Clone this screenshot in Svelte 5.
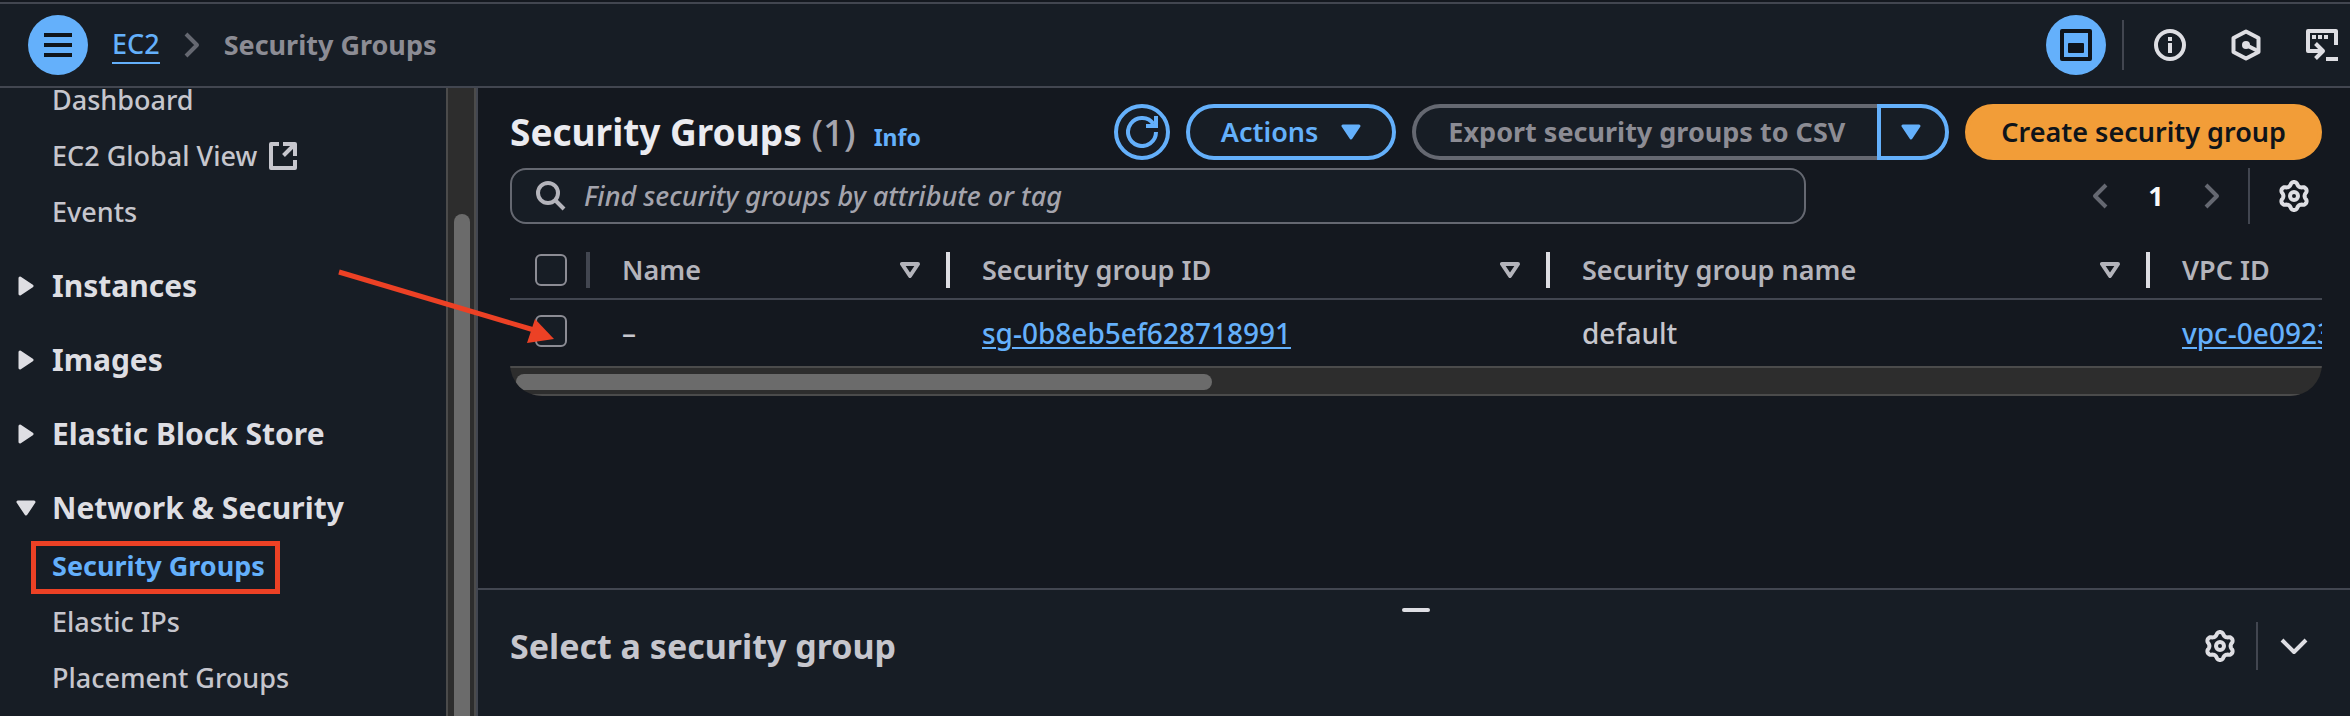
<script>
  const topLinks = [
    { label: 'Dashboard' },
    { label: 'EC2 Global View', external: true },
    { label: 'Events' }
  ];
  const sections = ['Instances', 'Images', 'Elastic Block Store'];
  const networkLinks = [
    { label: 'Security Groups', current: true },
    { label: 'Elastic IPs' },
    { label: 'Placement Groups' }
  ];
  const columns = ['Name', 'Security group ID', 'Security group name'];

  // Six-lobed gear outline in a 32 unit box.
  const gear =
    Array.from({ length: 120 }, (_, i) => {
      const a = (i * Math.PI) / 60;
      const c = -Math.cos(6 * a);
      const r = 12.3 + 1.7 * Math.sign(c) * Math.pow(Math.abs(c), 0.7);
      return `${i ? 'L' : 'M'}${(16 + r * Math.cos(a)).toFixed(2)} ${(16 + r * Math.sin(a)).toFixed(2)}`;
    }).join('') + 'Z';
</script>

{#snippet gearIcon()}
  <svg width="32" height="32" viewBox="0 0 32 32" fill="none" stroke="currentColor" stroke-linejoin="round" aria-hidden="true">
    <path d={gear} stroke-width="4" />
    <circle cx="16" cy="16" r="4" stroke-width="4" />
  </svg>
{/snippet}

{#snippet caretDown()}
  <svg width="20" height="16" viewBox="0 0 20 16" aria-hidden="true">
    <path d="M2 2H18L10 14Z" fill="currentColor" stroke="currentColor" stroke-width="3" stroke-linejoin="round" />
  </svg>
{/snippet}

{#snippet chevron(d, w, h)}
  <svg width={w} height={h} viewBox="0 0 {w} {h}" fill="none" stroke="currentColor" stroke-width="4" stroke-linejoin="round" aria-hidden="true">
    <path {d} />
  </svg>
{/snippet}

<div class="app">
  <header class="topbar">
    <button class="round" aria-label="Toggle navigation">
      <svg width="28" height="24" viewBox="0 0 28 24" aria-hidden="true">
        <path d="M0 2H28M0 12H28M0 22H28" stroke="currentColor" stroke-width="4" />
      </svg>
    </button>
    <nav class="crumbs" aria-label="Breadcrumb">
      <a href="#ec2">EC2</a>
      {@render chevron('M2 2L13 13L2 24', 16, 26)}
      <span>Security Groups</span>
    </nav>
    <div class="tools">
      <button class="round" aria-label="Split panel">
        <svg width="32" height="32" viewBox="0 0 32 32" aria-hidden="true">
          <rect x="2" y="2" width="28" height="28" fill="none" stroke="currentColor" stroke-width="4" stroke-linejoin="round" />
          <rect x="8" y="14" width="16" height="10" rx="1" fill="currentColor" />
        </svg>
      </button>
      <span class="rule"></span>
      <button class="icon" aria-label="Info">
        <svg width="32" height="32" viewBox="0 0 32 32" aria-hidden="true">
          <circle cx="16" cy="16" r="14" fill="none" stroke="currentColor" stroke-width="4" />
          <path d="M16 8V12M16 14V24" stroke="currentColor" stroke-width="4" />
        </svg>
      </button>
      <button class="icon" aria-label="Resources">
        <svg width="32" height="32" viewBox="0 0 32 32" fill="none" stroke="currentColor" stroke-width="4" stroke-linejoin="round" aria-hidden="true">
          <path d="M16 2.5L28.500 9V23L16 29.500L3.500 23V9Z" />
          <path d="M16 16L27 21.500" />
          <circle cx="16" cy="16" r="4" fill="currentColor" stroke="none" />
        </svg>
      </button>
      <button class="icon" aria-label="CloudShell">
        <svg width="32" height="32" viewBox="0 0 32 32" fill="none" stroke="currentColor" stroke-width="4" stroke-linejoin="round" aria-hidden="true">
          <path d="M30 16V2H2V22H17" />
          <path d="M9.500 14.500L17 22L9.500 29.500" />
          <path d="M20 30H32M6 8H10M12 8H16M18 8H22" />
        </svg>
      </button>
    </div>
  </header>

  <div class="body">
    <aside class="sidebar">
      <nav class="menu" aria-label="EC2">
        <ul>
          {#each topLinks as link}
            <li>
              <a href="#nav">{link.label}</a>
              {#if link.external}
                <svg width="28" height="28" viewBox="0 0 28 28" fill="none" stroke="currentColor" stroke-width="4" stroke-linejoin="round" aria-hidden="true">
                  <path d="M10 2H2V26H26V18" />
                  <path d="M14 2H26V14M26 2L14.500 13.500" />
                </svg>
              {/if}
            </li>
          {/each}
        </ul>
        {#each sections as section}
          <button class="section">
            <svg width="20" height="20" viewBox="0 0 20 20" aria-hidden="true">
              <path d="M4 2L16 10L4 18Z" fill="currentColor" stroke="currentColor" stroke-width="3" stroke-linejoin="round" />
            </svg>
            {section}
          </button>
        {/each}
        <button class="section" aria-expanded="true">{@render caretDown()}Network &amp; Security</button>
        <ul>
          {#each networkLinks as link}
            <li class:current={link.current}><a href="#nav">{link.label}</a></li>
          {/each}
        </ul>
      </nav>
      <div class="track"><div class="thumb"></div></div>
    </aside>

    <div class="content">
      <main>
        <div class="heading">
          <h1>Security Groups <span>(1)</span></h1>
          <a class="info" href="#info">Info</a>
          <div class="actions">
            <button class="btn refresh" aria-label="Refresh">
              <svg width="32" height="32" viewBox="0 0 32 32" fill="none" stroke="currentColor" stroke-width="4" aria-hidden="true">
                <path d="M30 16A14 14 0 1 1 27.500 8" />
                <path d="M30 0V10H20" />
              </svg>
            </button>
            <button class="btn menu-btn">Actions {@render caretDown()}</button>
            <div class="split">
              <button class="btn export" disabled>Export security groups to CSV</button>
              <button class="btn more" aria-label="More export options">{@render caretDown()}</button>
            </div>
            <button class="btn primary">Create security group</button>
          </div>
        </div>

        <div class="filters">
          <label class="search">
            <svg width="30" height="30" viewBox="0 0 30 30" fill="none" stroke="currentColor" stroke-width="4" aria-hidden="true">
              <circle cx="12" cy="12" r="10" />
              <path d="M19 19L28 28" />
            </svg>
            <input type="text" aria-label="Find security groups" placeholder="Find security groups by attribute or tag" />
          </label>
          <div class="pager">
            <button class="icon dim" aria-label="Previous page">{@render chevron('M14 2L3 13L14 24', 16, 26)}</button>
            <button class="icon page">1</button>
            <button class="icon dim" aria-label="Next page">{@render chevron('M2 2L13 13L2 24', 16, 26)}</button>
            <span class="rule"></span>
            <button class="icon" aria-label="Preferences">{@render gearIcon()}</button>
          </div>
        </div>

        <div class="table-wrap">
          <table>
            <colgroup>
              <col class="c-check" /><col class="c-name" /><col class="c-wide" /><col class="c-wide" /><col class="c-wide" />
            </colgroup>
            <thead>
              <tr>
                <th class="check"><div><input type="checkbox" aria-label="Select all" /><i class="faint"></i></div></th>
                {#each columns as column}
                  <th>
                    <div>
                      <span>{column}</span>
                      <svg width="20" height="16" viewBox="0 0 20 16" fill="none" aria-hidden="true">
                        <path d="M2 2H18L10 14Z" stroke="currentColor" stroke-width="4" stroke-linejoin="round" />
                      </svg>
                      <i></i>
                    </div>
                  </th>
                {/each}
                <th><div><span>VPC ID</span></div></th>
              </tr>
            </thead>
            <tbody>
              <tr>
                <td class="check"><input type="checkbox" aria-label="Select default" /></td>
                <td>–</td>
                <td><a href="#sg">sg-0b8eb5ef628718991</a></td>
                <td>default</td>
                <td><a href="#vpc">vpc-0e0923</a></td>
              </tr>
            </tbody>
          </table>
          <div class="hscroll"><div></div></div>
        </div>
      </main>

      <section class="panel">
        <div class="handle"></div>
        <div class="panel-head">
          <h2>Select a security group</h2>
          <button class="icon" aria-label="Panel preferences">{@render gearIcon()}</button>
          <span class="rule"></span>
          <button class="icon" aria-label="Close panel">{@render chevron('M2 2L14 14L26 2', 28, 17)}</button>
        </div>
      </section>
    </div>
  </div>

  <svg class="pointer" width="220" height="76" viewBox="0 0 220 76" aria-hidden="true">
    <path d="M1 4L196 62" stroke="#ec4125" stroke-width="5" />
    <path d="M216 71L197 51L189 75Z" fill="#ec4125" />
  </svg>
</div>

<style>
  :global(body) {
    background: #14181f;
  }
  .app {
    --line: #424650;
    --blue: #64b0fb;
    --text: #c6c6cd;
    --bright: #dedee3;
    --surface: #171d25;
    position: relative;
    display: flex;
    flex-direction: column;
    height: 100vh;
    overflow: hidden;
    color: var(--text);
    font: 500 27px/40px "Noto Sans", sans-serif;
  }
  .app :global(*) {
    box-sizing: border-box;
  }
  svg {
    display: block;
    flex: none;
  }
  button {
    display: flex;
    align-items: center;
    justify-content: center;
    flex: none;
    padding: 0;
    border: 0;
    background: none;
    color: inherit;
    font: inherit;
    white-space: nowrap;
  }
  a {
    color: inherit;
    text-decoration: none;
  }
  ul {
    margin: 0;
    padding: 0;
    list-style: none;
  }
  .icon {
    color: var(--bright);
  }
  .rule {
    width: 2px;
    background: var(--line);
  }

  .topbar {
    display: flex;
    align-items: center;
    height: 88px;
    flex: none;
    padding: 4px 12px 0 28px;
    background: var(--surface);
    border-bottom: 2px solid var(--line);
    box-shadow: inset 0 2px #14181f, inset 0 4px var(--line);
  }
  .round {
    width: 60px;
    height: 60px;
    border-radius: 50%;
    background: var(--blue);
    color: #0f141a;
  }
  .crumbs {
    display: flex;
    align-items: center;
    gap: 24px;
    margin-left: 24px;
    color: #656871;
  }
  .crumbs a {
    color: var(--blue);
    border-bottom: 2px solid var(--blue);
    line-height: 36px;
  }
  .crumbs span {
    color: #8c8c94;
    font-weight: 700;
  }
  .tools {
    display: flex;
    align-items: center;
    gap: 44px;
    margin-left: auto;
  }
  .tools .rule {
    height: 50px;
    margin: 0 -14px 0 -28px;
  }

  .body {
    display: flex;
    flex: 1;
    min-height: 0;
  }
  .sidebar {
    display: flex;
    width: 478px;
    flex: none;
    background: var(--surface);
    border-right: 2px solid var(--line);
  }
  .menu {
    flex: 1;
    overflow: hidden;
  }
  .menu li {
    display: flex;
    align-items: center;
    gap: 12px;
    height: 56px;
    padding-left: 52px;
    line-height: 24px;
  }
  .menu ul:first-child {
    margin: -16px 0 9px;
  }
  .section {
    justify-content: flex-start;
    gap: 16px;
    width: 100%;
    height: 74px;
    padding-left: 16px;
    color: var(--bright);
    font-size: 30px;
    font-weight: 700;
  }
  .menu .current {
    width: max-content;
    height: 53px;
    margin: -4px 0 0 31px;
    padding: 0 10px 4px 16px;
    border: 5px solid #ec4125;
    color: var(--blue);
    font-weight: 700;
  }
  .track {
    display: flex;
    width: 30px;
    padding: 126px 4px 0 6px;
    background: #2d2d2d;
    border: solid #4b4b4b;
    border-width: 0 2px;
  }
  .thumb {
    flex: 1;
    border-radius: 8px 8px 0 0;
    background: #6b6b6b;
  }

  .content {
    display: flex;
    flex: 1;
    flex-direction: column;
    min-width: 0;
  }
  main {
    flex: 1;
    padding: 16px 28px 0 32px;
  }
  .heading {
    display: flex;
    align-items: center;
    height: 56px;
  }
  h1 {
    margin: 0;
    color: #ebebf0;
    font-size: 37px;
    line-height: 56px;
  }
  h1 span {
    color: #a4a4ad;
    font-weight: 500;
  }
  .info {
    margin: 10px 0 0 18px;
    color: var(--blue);
    font-size: 23px;
    font-weight: 700;
  }
  .actions {
    display: flex;
    gap: 16px;
    margin-left: auto;
  }
  .btn {
    height: 56px;
    padding: 0 32px;
    border: 4px solid var(--blue);
    border-radius: 28px;
    background: var(--surface);
    color: var(--blue);
    font-weight: 600;
  }
  .refresh {
    width: 56px;
    padding: 0;
  }
  .menu-btn {
    gap: 23px;
    padding: 0 31px;
  }
  .split {
    display: flex;
  }
  .export {
    padding: 0 32px;
    border-color: #656871;
    border-right: 0;
    border-radius: 28px 0 0 28px;
    color: #8c8c94;
    font-weight: 700;
  }
  .more {
    width: 72px;
    padding: 0 4px 0 0;
    border-radius: 0 28px 28px 0;
  }
  .primary {
    border-color: #f29d38;
    background: #f29d38;
    color: #0f141a;
  }

  .filters {
    display: flex;
    justify-content: space-between;
    height: 56px;
    margin-top: 8px;
  }
  .search {
    display: flex;
    align-items: center;
    gap: 18px;
    width: 1296px;
    padding: 0 24px;
    border: 2px solid #656871;
    border-radius: 16px;
    background: var(--surface);
    color: #b4b4bb;
  }
  .search input {
    flex: 1;
    padding: 0;
    border: 0;
    outline: 0;
    background: none;
    color: var(--text);
    font: inherit;
  }
  .search input::placeholder {
    color: #a4a4ad;
    font-style: italic;
    opacity: 1;
  }
  .pager {
    display: flex;
    padding-right: 12px;
  }
  .pager .rule {
    margin: 0 28px;
  }
  .dim {
    color: #656871;
  }
  .page {
    width: 96px;
    color: #f9f9fa;
    font-weight: 700;
  }

  .table-wrap {
    margin-top: 28px;
    overflow: hidden;
    border-radius: 0 0 32px 32px;
  }
  table {
    width: 2240px;
    border-collapse: collapse;
    table-layout: fixed;
  }
  .c-check {
    width: 80px;
  }
  .c-name {
    width: 360px;
  }
  .c-wide {
    width: 600px;
  }
  th {
    padding: 0 0 10px 32px;
    border-bottom: 2px solid var(--line);
    color: #b4b4bb;
    font-weight: 600;
    text-align: left;
  }
  th div {
    display: flex;
    align-items: center;
    height: 36px;
  }
  th span {
    flex: 1;
  }
  th i {
    width: 4px;
    height: 36px;
    margin-left: 26px;
    background: var(--bright);
  }
  th .faint {
    margin-left: auto;
    background: var(--line);
  }
  td {
    height: 67px;
    padding: 0 0 0 32px;
    font-size: 28px;
  }
  td a {
    color: var(--blue);
    text-decoration: underline;
    text-decoration-thickness: 2px;
    text-underline-offset: 3px;
  }
  .check {
    padding-left: 25px;
  }
  input[type="checkbox"] {
    display: block;
    width: 32px;
    height: 32px;
    margin: 0;
    appearance: none;
    border: 2px solid #8c8c94;
    border-radius: 6px;
    background: var(--surface);
  }
  td input[type="checkbox"] {
    margin-bottom: 4px;
  }
  .hscroll {
    height: 30px;
    padding: 6px;
    background: #2d2d2d;
    border: solid #4b4b4b;
    border-width: 2px 0;
  }
  .hscroll div {
    width: 696px;
    height: 16px;
    border-radius: 8px;
    background: #6b6b6b;
  }

  .panel {
    height: 128px;
    flex: none;
    padding: 18px 28px 0 32px;
    border-top: 2px solid var(--line);
    background: var(--surface);
  }
  .handle {
    width: 28px;
    height: 4px;
    margin: 0 auto;
    border-radius: 2px;
    background: var(--bright);
  }
  .panel-head {
    display: flex;
    align-items: center;
    height: 48px;
    margin: 10px 14px 0 0;
  }
  h2 {
    flex: 1;
    margin: 0;
    font-size: 34px;
  }
  .panel-head .rule {
    height: 48px;
    margin: 0 22px 0 20px;
  }

  .pointer {
    position: absolute;
    left: 338px;
    top: 268px;
    pointer-events: none;
  }
</style>
